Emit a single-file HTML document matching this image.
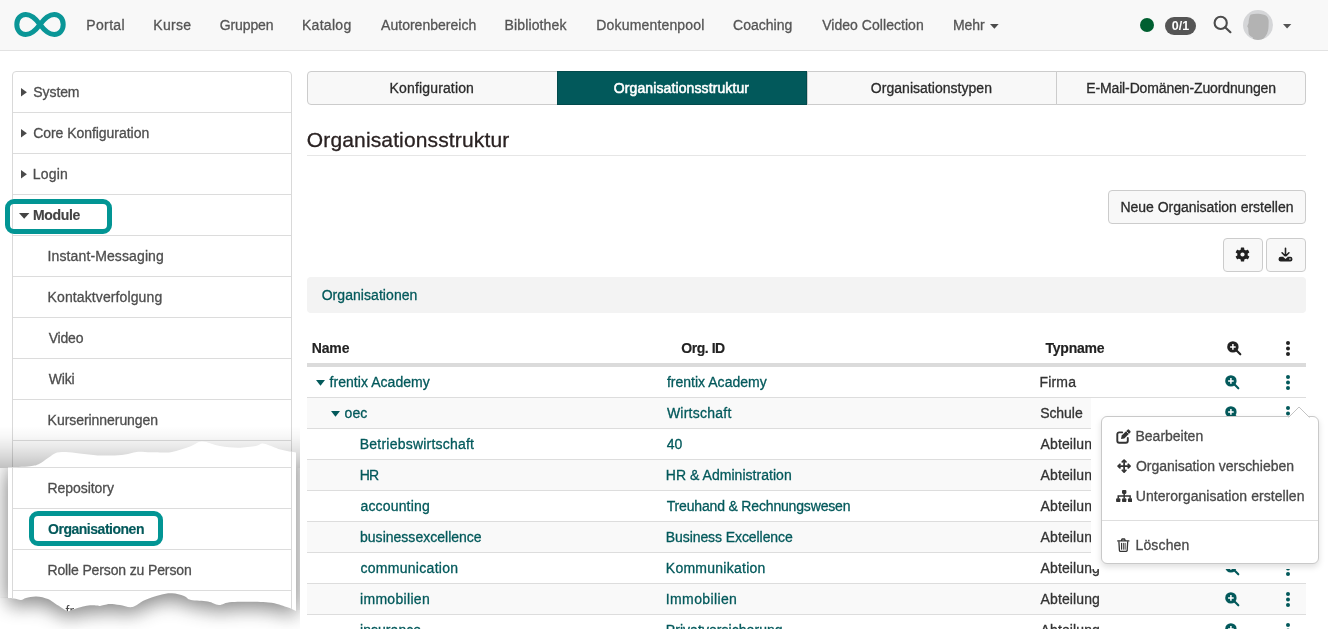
<!DOCTYPE html>
<html lang="de">
<head>
<meta charset="utf-8">
<title>Organisationsstruktur</title>
<style>
*{box-sizing:border-box;margin:0;padding:0}
html,body{width:1328px;height:629px;overflow:hidden;background:#fff}
body{font-family:"Liberation Sans",sans-serif;font-size:14px;color:#333;position:relative}
.a{position:absolute;white-space:nowrap}
span.a{-webkit-text-stroke:0.3px currentColor}
#nav{left:0;top:0;width:1328px;height:51px;background:#f8f8f8;border-bottom:1px solid #e2e2e2}
#side{left:12px;top:71px;width:280px;height:600px;border:1px solid #d9d9d9;border-radius:4px 4px 0 0;background:#fff}
.sl{left:13px;width:278px;height:1px;background:#dcdcdc}
.car{width:0;height:0;border-style:solid}
.tab{top:71px;height:34px;background:#f8f8f8;border:1px solid #ccc}
.tab.on{background:#02595b;border-color:#024a4c}
.rb{left:307px;width:999px;height:30px;background:#f9f9f9}
.rl{left:307px;width:999px;height:1px;background:#ddd}
.btn{border:1px solid #ccc;border-radius:4px;background:#f8f8f8}
</style>
</head>
<body>
<div id="root" style="position:absolute;left:0;top:0;width:1328px;height:629px;will-change:transform">
<!-- NAVBAR -->
<div id="nav" class="a"></div>
<svg class="a" style="left:13px;top:11px" width="54" height="27" viewBox="0 0 54 27"><path d="M27 13.5 C21.5 6 17 3.500 12.800 3.500 C7.300 3.500 3.800 8 3.800 13.500 C3.800 19 7.300 23.500 12.800 23.500 C17 23.500 21.500 21 27 13.500 C32.500 6 37 3.500 41.200 3.500 C46.700 3.500 50.200 8 50.200 13.500 C50.200 19 46.700 23.500 41.200 23.500 C37 23.500 32.500 21 27 13.500 Z" fill="none" stroke="#0a9697" stroke-width="5" stroke-linejoin="round"/></svg>
<div class="a" style="left:1140px;top:18px;width:14px;height:14px;border-radius:50%;background:#005f30"></div>
<div class="a" style="left:1165px;top:17px;width:31px;height:18px;border-radius:9px;background:#555;color:#fff;font-weight:bold;font-size:12.500px;line-height:18px;text-align:center">0/1</div>
<svg class="a" style="left:1212px;top:14px" width="22" height="22" viewBox="0 0 22 22"><circle cx="8.700" cy="8.900" r="6.100" fill="none" stroke="#4c4c4c" stroke-width="2.100"/><path d="M13.100 13.300 L18.400 18.200" stroke="#4c4c4c" stroke-width="2.200" stroke-linecap="round"/></svg>
<svg class="a" style="left:1243px;top:9.800px" width="30" height="30" viewBox="0 0 30 30"><defs><clipPath id="av"><circle cx="15" cy="15" r="15"/></clipPath></defs><circle cx="15" cy="15" r="15" fill="#d5d6d8"/><path clip-path="url(#av)" d="M7.900 4.600 C11 3.600 15 3.800 17.500 4 C21 4.300 23.500 5.500 24.600 7.200 C25.800 9.500 25.800 11.500 25.600 13.900 C25.600 17 25.400 19.500 24.600 21.900 C23.800 24.200 22.800 26 21.500 27.400 L19 30 L9.900 30 L9.900 27.400 C8 26.600 6.200 25.500 5.700 23.800 C5.300 22 5.400 20 5.200 17.900 L4.200 16.300 L5.600 13.100 C5.600 11 5.900 9 6.400 7.600 C6.700 6.300 7.100 5.200 7.900 4.600 Z" fill="#b3b3b3"/></svg>

<!-- SIDEBAR -->
<div id="side" class="a"></div>
<div class="a sl" style="top:112px"></div>
<div class="a sl" style="top:153px"></div>
<div class="a sl" style="top:194px"></div>
<div class="a sl" style="top:235px"></div>
<div class="a sl" style="top:276px"></div>
<div class="a sl" style="top:317px"></div>
<div class="a sl" style="top:358px"></div>
<div class="a sl" style="top:399px"></div>
<div class="a sl" style="top:440px"></div>
<div class="a" style="left:5px;top:199px;width:106.600px;height:34.600px;border:5px solid #029594;border-radius:9px"></div>

<svg class="a" style="left:20.4px;top:86.8px" width="7.9" height="10.4" viewBox="0 0 7.9 10.4"><path d="M1 1 L6.9 5.2 L1 9.4 Z" fill="#4a4a4a"/></svg>
<svg class="a" style="left:20.4px;top:127.8px" width="7.9" height="10.4" viewBox="0 0 7.9 10.4"><path d="M1 1 L6.9 5.2 L1 9.4 Z" fill="#4a4a4a"/></svg>
<svg class="a" style="left:20.4px;top:168.8px" width="7.9" height="10.4" viewBox="0 0 7.9 10.4"><path d="M1 1 L6.9 5.2 L1 9.4 Z" fill="#4a4a4a"/></svg>
<svg class="a" style="left:17.7px;top:211.7px" width="12.4" height="7.8" viewBox="0 0 12.4 7.8"><path d="M1 1 L11.4 1 L6.2 6.8 Z" fill="#444"/></svg>
<svg class="a" style="left:989.4px;top:22.8px" width="10.7" height="6.7" viewBox="0 0 10.7 6.7"><path d="M1 1 L9.7 1 L5.4 5.7 Z" fill="#4c4c4c"/></svg>
<svg class="a" style="left:1281.9px;top:22.7px" width="10.3" height="6.4" viewBox="0 0 10.3 6.4"><path d="M1 1 L9.3 1 L5.1 5.4 Z" fill="#555"/></svg>
<!-- TABS -->
<div class="a tab" style="left:307px;width:251px;border-radius:4px 0 0 4px"></div>
<div class="a tab" style="left:807px;width:250px"></div>
<div class="a tab" style="left:1056px;width:250px;border-radius:0 4px 4px 0"></div>
<div class="a tab on" style="left:557px;width:250px"></div>

<div class="a" style="left:307px;top:155px;width:999px;height:1px;background:#e6e6e6"></div>

<!-- BUTTONS -->
<div class="a btn" style="left:1108px;top:190px;width:198px;height:34px"></div>
<div class="a btn" style="left:1223px;top:238px;width:40px;height:34px"></div>
<div class="a btn" style="left:1266px;top:238px;width:40px;height:34px"></div>
<!-- gear -->
<svg class="a" style="left:1234.800px;top:247.300px" width="15" height="15" viewBox="-7.500 -7.500 15 15"><g fill="#222"><circle r="5.200"/><rect x="-1.700" y="-7.100" width="3.400" height="14.200" rx="0.600"/><rect x="-1.700" y="-7.100" width="3.400" height="14.200" rx="0.600" transform="rotate(60)"/><rect x="-1.700" y="-7.100" width="3.400" height="14.200" rx="0.600" transform="rotate(120)"/></g><circle r="2.100" fill="#f8f8f8"/></svg>
<!-- download -->
<svg class="a" style="left:1278.300px;top:247.300px" width="15" height="15" viewBox="0 0 15 15"><path d="M7.500 1.200 V9 M4.100 5.800 L7.500 9.200 L10.900 5.800" fill="none" stroke="#222" stroke-width="1.600" stroke-linecap="round" stroke-linejoin="round"/><rect x="0.600" y="9.800" width="13.800" height="4.600" rx="2" fill="#222"/><path d="M4.800 9.600 L7.500 12.100 L10.200 9.600 Z" fill="#f8f8f8"/><circle cx="12" cy="12.100" r="0.750" fill="#f8f8f8"/></svg>

<!-- ORG BAR -->
<div class="a" style="left:307px;top:277px;width:999px;height:36px;border-radius:4px;background:#f3f3f3"></div>

<!-- TABLE -->
<div class="a" style="left:307px;top:363.100px;width:999px;height:3.800px;background:#dbdbdb"></div>
<div class="a rl" style="top:397px"></div>
<div class="a rb" style="top:398px"></div>
<div class="a rl" style="top:428px"></div>
<div class="a rl" style="top:459px"></div>
<div class="a rb" style="top:460px"></div>
<div class="a rl" style="top:490px"></div>
<div class="a rl" style="top:521px"></div>
<div class="a rb" style="top:522px"></div>
<div class="a rl" style="top:552px"></div>
<div class="a rl" style="top:583px"></div>
<div class="a rb" style="top:584px"></div>
<div class="a rl" style="top:614px"></div>
<div class="a rl" style="top:645px"></div>
<svg class="a" style="left:1226.5px;top:340.8px" width="15" height="15" viewBox="0 0 15 15"><circle cx="5.900" cy="5.900" r="5.700" fill="#222"/><path d="M9.800 9.800 L13.300 13.300" stroke="#222" stroke-width="2.100" stroke-linecap="round"/><path d="M5.900 3.100 V8.700 M3.100 5.900 H8.700" stroke="#fff" stroke-width="1.500"/></svg>
<svg class="a" style="left:1285.2px;top:339.7px" width="6" height="18" viewBox="0 0 6 18"><circle cx="3" cy="3" r="2" fill="#222"/><circle cx="3" cy="8.500" r="2" fill="#222"/><circle cx="3" cy="14" r="2" fill="#222"/></svg>
<svg class="a" style="left:1225.1px;top:374.8px" width="15" height="15" viewBox="0 0 15 15"><circle cx="5.900" cy="5.900" r="5.700" fill="#03595b"/><path d="M9.800 9.800 L13.300 13.300" stroke="#03595b" stroke-width="2.100" stroke-linecap="round"/><path d="M5.900 3.100 V8.700 M3.100 5.900 H8.700" stroke="#fff" stroke-width="1.500"/></svg>
<svg class="a" style="left:1285.2px;top:374.2px" width="6" height="18" viewBox="0 0 6 18"><circle cx="3" cy="3" r="2" fill="#03595b"/><circle cx="3" cy="8.500" r="2" fill="#03595b"/><circle cx="3" cy="14" r="2" fill="#03595b"/></svg>
<svg class="a" style="left:1225.1px;top:405.8px" width="15" height="15" viewBox="0 0 15 15"><circle cx="5.900" cy="5.900" r="5.700" fill="#03595b"/><path d="M9.800 9.800 L13.300 13.300" stroke="#03595b" stroke-width="2.100" stroke-linecap="round"/><path d="M5.900 3.100 V8.700 M3.100 5.900 H8.700" stroke="#fff" stroke-width="1.500"/></svg>
<svg class="a" style="left:1285.2px;top:405.2px" width="6" height="18" viewBox="0 0 6 18"><circle cx="3" cy="3" r="2" fill="#03595b"/><circle cx="3" cy="8.500" r="2" fill="#03595b"/><circle cx="3" cy="14" r="2" fill="#03595b"/></svg>
<svg class="a" style="left:1225.1px;top:436.8px" width="15" height="15" viewBox="0 0 15 15"><circle cx="5.900" cy="5.900" r="5.700" fill="#03595b"/><path d="M9.800 9.800 L13.300 13.300" stroke="#03595b" stroke-width="2.100" stroke-linecap="round"/><path d="M5.900 3.100 V8.700 M3.100 5.900 H8.700" stroke="#fff" stroke-width="1.500"/></svg>
<svg class="a" style="left:1285.2px;top:436.2px" width="6" height="18" viewBox="0 0 6 18"><circle cx="3" cy="3" r="2" fill="#03595b"/><circle cx="3" cy="8.500" r="2" fill="#03595b"/><circle cx="3" cy="14" r="2" fill="#03595b"/></svg>
<svg class="a" style="left:1225.1px;top:467.8px" width="15" height="15" viewBox="0 0 15 15"><circle cx="5.900" cy="5.900" r="5.700" fill="#03595b"/><path d="M9.800 9.800 L13.300 13.300" stroke="#03595b" stroke-width="2.100" stroke-linecap="round"/><path d="M5.900 3.100 V8.700 M3.100 5.900 H8.700" stroke="#fff" stroke-width="1.500"/></svg>
<svg class="a" style="left:1285.2px;top:467.2px" width="6" height="18" viewBox="0 0 6 18"><circle cx="3" cy="3" r="2" fill="#03595b"/><circle cx="3" cy="8.500" r="2" fill="#03595b"/><circle cx="3" cy="14" r="2" fill="#03595b"/></svg>
<svg class="a" style="left:1225.1px;top:498.8px" width="15" height="15" viewBox="0 0 15 15"><circle cx="5.900" cy="5.900" r="5.700" fill="#03595b"/><path d="M9.800 9.800 L13.300 13.300" stroke="#03595b" stroke-width="2.100" stroke-linecap="round"/><path d="M5.900 3.100 V8.700 M3.100 5.900 H8.700" stroke="#fff" stroke-width="1.500"/></svg>
<svg class="a" style="left:1285.2px;top:498.2px" width="6" height="18" viewBox="0 0 6 18"><circle cx="3" cy="3" r="2" fill="#03595b"/><circle cx="3" cy="8.500" r="2" fill="#03595b"/><circle cx="3" cy="14" r="2" fill="#03595b"/></svg>
<svg class="a" style="left:1225.1px;top:529.8px" width="15" height="15" viewBox="0 0 15 15"><circle cx="5.900" cy="5.900" r="5.700" fill="#03595b"/><path d="M9.800 9.800 L13.300 13.300" stroke="#03595b" stroke-width="2.100" stroke-linecap="round"/><path d="M5.900 3.100 V8.700 M3.100 5.900 H8.700" stroke="#fff" stroke-width="1.500"/></svg>
<svg class="a" style="left:1285.2px;top:529.2px" width="6" height="18" viewBox="0 0 6 18"><circle cx="3" cy="3" r="2" fill="#03595b"/><circle cx="3" cy="8.500" r="2" fill="#03595b"/><circle cx="3" cy="14" r="2" fill="#03595b"/></svg>
<svg class="a" style="left:1225.1px;top:560.8px" width="15" height="15" viewBox="0 0 15 15"><circle cx="5.900" cy="5.900" r="5.700" fill="#03595b"/><path d="M9.800 9.800 L13.300 13.300" stroke="#03595b" stroke-width="2.100" stroke-linecap="round"/><path d="M5.900 3.100 V8.700 M3.100 5.900 H8.700" stroke="#fff" stroke-width="1.500"/></svg>
<svg class="a" style="left:1285.2px;top:560.2px" width="6" height="18" viewBox="0 0 6 18"><circle cx="3" cy="3" r="2" fill="#03595b"/><circle cx="3" cy="8.500" r="2" fill="#03595b"/><circle cx="3" cy="14" r="2" fill="#03595b"/></svg>
<svg class="a" style="left:1225.1px;top:591.8px" width="15" height="15" viewBox="0 0 15 15"><circle cx="5.900" cy="5.900" r="5.700" fill="#03595b"/><path d="M9.800 9.800 L13.300 13.300" stroke="#03595b" stroke-width="2.100" stroke-linecap="round"/><path d="M5.900 3.100 V8.700 M3.100 5.900 H8.700" stroke="#fff" stroke-width="1.500"/></svg>
<svg class="a" style="left:1285.2px;top:591.2px" width="6" height="18" viewBox="0 0 6 18"><circle cx="3" cy="3" r="2" fill="#03595b"/><circle cx="3" cy="8.500" r="2" fill="#03595b"/><circle cx="3" cy="14" r="2" fill="#03595b"/></svg>
<svg class="a" style="left:1225.1px;top:622.8px" width="15" height="15" viewBox="0 0 15 15"><circle cx="5.900" cy="5.900" r="5.700" fill="#03595b"/><path d="M9.800 9.800 L13.300 13.300" stroke="#03595b" stroke-width="2.100" stroke-linecap="round"/><path d="M5.900 3.100 V8.700 M3.100 5.900 H8.700" stroke="#fff" stroke-width="1.500"/></svg>
<svg class="a" style="left:1285.2px;top:622.2px" width="6" height="18" viewBox="0 0 6 18"><circle cx="3" cy="3" r="2" fill="#03595b"/><circle cx="3" cy="8.500" r="2" fill="#03595b"/><circle cx="3" cy="14" r="2" fill="#03595b"/></svg>
<svg class="a" style="left:315.0px;top:378.8px" width="11.0" height="7.7" viewBox="0 0 11.0 7.7"><path d="M1 1 L10.0 1 L5.5 6.7 Z" fill="#03595b"/></svg>
<svg class="a" style="left:330.3px;top:409.8px" width="11.0" height="7.7" viewBox="0 0 11.0 7.7"><path d="M1 1 L10.0 1 L5.5 6.7 Z" fill="#03595b"/></svg>
<span class="a" style="left:86.31px;top:15.0px;height:20px;line-height:20px;font-size:14px;color:#555;letter-spacing:0.349px">Portal</span>
<span class="a" style="left:153.31px;top:15.0px;height:20px;line-height:20px;font-size:14px;color:#555;letter-spacing:0.272px">Kurse</span>
<span class="a" style="left:219.64px;top:15.0px;height:20px;line-height:20px;font-size:14px;color:#555;letter-spacing:-0.090px">Gruppen</span>
<span class="a" style="left:302.01px;top:15.0px;height:20px;line-height:20px;font-size:14px;color:#555;letter-spacing:0.283px">Katalog</span>
<span class="a" style="left:381.10px;top:15.0px;height:20px;line-height:20px;font-size:14px;color:#555;letter-spacing:0.010px">Autorenbereich</span>
<span class="a" style="left:504.51px;top:15.0px;height:20px;line-height:20px;font-size:14px;color:#555;letter-spacing:0.141px">Bibliothek</span>
<span class="a" style="left:596.31px;top:15.0px;height:20px;line-height:20px;font-size:14px;color:#555;letter-spacing:0.167px">Dokumentenpool</span>
<span class="a" style="left:733.04px;top:15.0px;height:20px;line-height:20px;font-size:14px;color:#555;letter-spacing:0.013px">Coaching</span>
<span class="a" style="left:822.20px;top:15.0px;height:20px;line-height:20px;font-size:14px;color:#555;letter-spacing:0.038px">Video Collection</span>
<span class="a" style="left:952.91px;top:15.0px;height:20px;line-height:20px;font-size:14px;color:#555;letter-spacing:-0.011px">Mehr</span>
<span class="a" style="left:33.36px;top:82.0px;height:20px;line-height:20px;font-size:14px;color:#4e4e4e;letter-spacing:-0.103px">System</span>
<span class="a" style="left:33.14px;top:123.0px;height:20px;line-height:20px;font-size:14px;color:#4e4e4e;letter-spacing:-0.041px">Core Konfiguration</span>
<span class="a" style="left:32.71px;top:164.0px;height:20px;line-height:20px;font-size:14px;color:#4e4e4e;letter-spacing:0.231px">Login</span>
<span class="a" style="left:32.92px;top:205.0px;height:20px;line-height:20px;font-size:14px;color:#444;letter-spacing:-0.314px;font-weight:bold;-webkit-text-stroke:0.15px currentColor">Module</span>
<span class="a" style="left:47.61px;top:246.0px;height:20px;line-height:20px;font-size:14px;color:#4e4e4e;letter-spacing:0.112px">Instant-Messaging</span>
<span class="a" style="left:47.61px;top:287.0px;height:20px;line-height:20px;font-size:14px;color:#4e4e4e;letter-spacing:0.108px">Kontaktverfolgung</span>
<span class="a" style="left:48.70px;top:328.0px;height:20px;line-height:20px;font-size:14px;color:#4e4e4e;letter-spacing:-0.197px">Video</span>
<span class="a" style="left:48.70px;top:369.0px;height:20px;line-height:20px;font-size:14px;color:#4e4e4e;letter-spacing:-0.171px">Wiki</span>
<span class="a" style="left:47.61px;top:410.0px;height:20px;line-height:20px;font-size:14px;color:#4e4e4e;letter-spacing:-0.054px">Kurserinnerungen</span>
<span class="a" style="left:389.61px;top:78.0px;height:20px;line-height:20px;font-size:14px;color:#2b2b2b;letter-spacing:0.148px">Konfiguration</span>
<span class="a" style="left:613.84px;top:78.0px;height:20px;line-height:20px;font-size:14px;color:#fff;letter-spacing:0.103px;-webkit-text-stroke:0.55px currentColor">Organisationsstruktur</span>
<span class="a" style="left:870.84px;top:78.0px;height:20px;line-height:20px;font-size:14px;color:#2b2b2b;letter-spacing:0.030px">Organisationstypen</span>
<span class="a" style="left:1086.21px;top:78.0px;height:20px;line-height:20px;font-size:14px;color:#2b2b2b;letter-spacing:-0.128px">E-Mail-Domänen-Zuordnungen</span>
<span class="a" style="left:306.82px;top:125.0px;height:30px;line-height:30px;font-size:21px;color:#2a2222;letter-spacing:0.140px">Organisationsstruktur</span>
<span class="a" style="left:1120.41px;top:197.0px;height:20px;line-height:20px;font-size:14px;color:#2b2b2b;letter-spacing:-0.018px">Neue Organisation erstellen</span>
<span class="a" style="left:321.64px;top:285.0px;height:20px;line-height:20px;font-size:14px;color:#03595b;letter-spacing:0.061px">Organisationen</span>
<span class="a" style="left:311.73px;top:338.0px;height:20px;line-height:20px;font-size:14px;color:#222;letter-spacing:-0.136px;font-weight:bold;-webkit-text-stroke:0.15px currentColor">Name</span>
<span class="a" style="left:681.26px;top:338.0px;height:20px;line-height:20px;font-size:14px;color:#222;letter-spacing:-0.458px;font-weight:bold;-webkit-text-stroke:0.15px currentColor">Org. ID</span>
<span class="a" style="left:1045.60px;top:338.0px;height:20px;line-height:20px;font-size:14px;color:#222;letter-spacing:-0.262px;font-weight:bold;-webkit-text-stroke:0.15px currentColor">Typname</span>
<span class="a" style="left:329.60px;top:372.0px;height:20px;line-height:20px;font-size:14px;color:#03595b;letter-spacing:0.038px">frentix Academy</span>
<span class="a" style="left:666.90px;top:372.0px;height:20px;line-height:20px;font-size:14px;color:#03595b;letter-spacing:0.016px">frentix Academy</span>
<span class="a" style="left:1039.51px;top:372.0px;height:20px;line-height:20px;font-size:14px;color:#333;letter-spacing:0.183px">Firma</span>
<span class="a" style="left:344.56px;top:403.0px;height:20px;line-height:20px;font-size:14px;color:#03595b;letter-spacing:0.042px">oec</span>
<span class="a" style="left:666.90px;top:403.0px;height:20px;line-height:20px;font-size:14px;color:#03595b;letter-spacing:0.247px">Wirtschaft</span>
<span class="a" style="left:1040.16px;top:403.0px;height:20px;line-height:20px;font-size:14px;color:#333;letter-spacing:-0.060px">Schule</span>
<span class="a" style="left:359.81px;top:434.0px;height:20px;line-height:20px;font-size:14px;color:#03595b;letter-spacing:0.215px">Betriebswirtschaft</span>
<span class="a" style="left:666.68px;top:434.0px;height:20px;line-height:20px;font-size:14px;color:#03595b;letter-spacing:-0.005px">40</span>
<span class="a" style="left:1040.60px;top:434.0px;height:20px;line-height:20px;font-size:14px;color:#333;letter-spacing:0.113px">Abteilung</span>
<span class="a" style="left:359.81px;top:465.0px;height:20px;line-height:20px;font-size:14px;color:#03595b;letter-spacing:-0.842px">HR</span>
<span class="a" style="left:665.81px;top:465.0px;height:20px;line-height:20px;font-size:14px;color:#03595b;letter-spacing:0.035px">HR &amp; Administration</span>
<span class="a" style="left:1040.60px;top:465.0px;height:20px;line-height:20px;font-size:14px;color:#333;letter-spacing:0.113px">Abteilung</span>
<span class="a" style="left:360.46px;top:496.0px;height:20px;line-height:20px;font-size:14px;color:#03595b;letter-spacing:0.167px">accounting</span>
<span class="a" style="left:666.68px;top:496.0px;height:20px;line-height:20px;font-size:14px;color:#03595b;letter-spacing:-0.167px">Treuhand &amp; Rechnungswesen</span>
<span class="a" style="left:1040.60px;top:496.0px;height:20px;line-height:20px;font-size:14px;color:#333;letter-spacing:0.113px">Abteilung</span>
<span class="a" style="left:360.03px;top:527.0px;height:20px;line-height:20px;font-size:14px;color:#03595b;letter-spacing:0.014px">businessexcellence</span>
<span class="a" style="left:665.81px;top:527.0px;height:20px;line-height:20px;font-size:14px;color:#03595b;letter-spacing:-0.080px">Business Excellence</span>
<span class="a" style="left:1040.60px;top:527.0px;height:20px;line-height:20px;font-size:14px;color:#333;letter-spacing:0.113px">Abteilung</span>
<span class="a" style="left:360.46px;top:558.0px;height:20px;line-height:20px;font-size:14px;color:#03595b;letter-spacing:0.289px">communication</span>
<span class="a" style="left:665.81px;top:558.0px;height:20px;line-height:20px;font-size:14px;color:#03595b;letter-spacing:0.258px">Kommunikation</span>
<span class="a" style="left:1040.60px;top:558.0px;height:20px;line-height:20px;font-size:14px;color:#333;letter-spacing:0.113px">Abteilung</span>
<span class="a" style="left:360.03px;top:589.0px;height:20px;line-height:20px;font-size:14px;color:#03595b;letter-spacing:0.306px">immobilien</span>
<span class="a" style="left:665.81px;top:589.0px;height:20px;line-height:20px;font-size:14px;color:#03595b;letter-spacing:0.377px">Immobilien</span>
<span class="a" style="left:1040.60px;top:589.0px;height:20px;line-height:20px;font-size:14px;color:#333;letter-spacing:0.113px">Abteilung</span>
<span class="a" style="left:360.03px;top:620.0px;height:20px;line-height:20px;font-size:14px;color:#03595b;letter-spacing:0.042px">insurance</span>
<span class="a" style="left:665.81px;top:620.0px;height:20px;line-height:20px;font-size:14px;color:#03595b;letter-spacing:0.050px">Privatversicherung</span>
<span class="a" style="left:1040.60px;top:620.0px;height:20px;line-height:20px;font-size:14px;color:#333;letter-spacing:0.113px">Abteilung</span>

<!-- popup white rect -->
<div class="a" style="left:1091px;top:398px;width:237px;height:171px;background:#fff"></div>
<svg class="a" style="left:1225.1px;top:405.8px" width="15" height="15" viewBox="0 0 15 15"><circle cx="5.900" cy="5.900" r="5.700" fill="#03595b"/><path d="M9.800 9.800 L13.300 13.300" stroke="#03595b" stroke-width="2.100" stroke-linecap="round"/><path d="M5.900 3.100 V8.700 M3.100 5.900 H8.700" stroke="#fff" stroke-width="1.500"/></svg><svg class="a" style="left:1285.2px;top:405.2px" width="6" height="18" viewBox="0 0 6 18"><circle cx="3" cy="3" r="2" fill="#03595b"/><circle cx="3" cy="8.500" r="2" fill="#03595b"/><circle cx="3" cy="14" r="2" fill="#03595b"/></svg>
<!-- popup -->
<div class="a" style="left:1101px;top:416px;width:217.500px;height:148px;background:#fff;border:1px solid #c9c9c9;border-radius:6px;box-shadow:0 3px 6px rgba(0,0,0,0.13)"></div>
<svg class="a" style="left:1286px;top:404px" width="26" height="14" viewBox="0 0 26 14"><path d="M2.500 13.500 L13 3 L23.500 13.500" fill="#fff" stroke="#c4c4c4" stroke-width="1"/><rect x="3" y="13" width="20" height="1" fill="#fff"/></svg>
<div class="a" style="left:1102px;top:520px;width:215.500px;height:1px;background:#dedede"></div>
<svg class="a" style="left:1116px;top:428.500px" width="15" height="15" viewBox="0 0 15 15"><path d="M6.200 3.400 H3.200 A1.900 1.900 0 0 0 1.300 5.300 V11.800 A1.900 1.900 0 0 0 3.200 13.700 H9.900 A1.900 1.900 0 0 0 11.800 11.800 V8.900" fill="none" stroke="#333" stroke-width="1.900" stroke-linecap="round"/><path d="M11.600 0.700 A1 1 0 0 1 13 0.700 L14.300 2 A1 1 0 0 1 14.300 3.400 L8.300 9.400 L5 10.100 L5.700 6.600 Z" fill="#333"/><path d="M10.400 2.400 L12.600 4.600" stroke="#fff" stroke-width="0.800"/></svg>
<svg class="a" style="left:1116.500px;top:459px" width="14.200" height="14.200" viewBox="0 0 14 14"><path d="M7 1.500 V12.500 M1.500 7 H12.500" stroke="#333" stroke-width="1.700"/><path d="M5.200 2.900 L7 1.100 L8.800 2.900 M5.200 11.100 L7 12.900 L8.800 11.100 M2.900 5.200 L1.100 7 L2.900 8.800 M11.100 5.200 L12.900 7 L11.100 8.800" fill="none" stroke="#333" stroke-width="1.700" stroke-linecap="round" stroke-linejoin="round"/></svg>
<svg class="a" style="left:1115.500px;top:489.500px" width="16.400" height="12.300" viewBox="0 0 16.400 12.300"><rect x="6" y="0" width="4.400" height="3.900" rx="1.100" fill="#333"/><rect x="0.100" y="8.200" width="4.300" height="4" rx="1.100" fill="#333"/><rect x="6.050" y="8.200" width="4.300" height="4" rx="1.100" fill="#333"/><rect x="12" y="8.200" width="4.300" height="4" rx="1.100" fill="#333"/><path d="M8.200 3.500 V8.500 M2.250 8.500 V6 H14.150 V8.500" fill="none" stroke="#333" stroke-width="1.500"/></svg>
<svg class="a" style="left:1117px;top:537.800px" width="12.600" height="14.200" viewBox="0 0 12.600 14.200"><path d="M0.700 2.900 H11.900 M4.300 2.700 L5 1 H7.600 L8.300 2.700" fill="none" stroke="#333" stroke-width="1.300" stroke-linecap="round" stroke-linejoin="round"/><path d="M1.900 3.200 L2.400 12.200 A1.200 1.200 0 0 0 3.600 13.400 H9 A1.200 1.200 0 0 0 10.200 12.200 L10.700 3.200" fill="none" stroke="#333" stroke-width="1.300"/><path d="M4.500 5.300 V11.300 M6.300 5.300 V11.300 M8.100 5.300 V11.300" stroke="#333" stroke-width="1" stroke-linecap="round"/></svg>

<!-- TORN PAPER -->
<svg class="a" style="left:0;top:415px" width="301" height="214" viewBox="0 415 301 214">
<defs>
<filter id="sh" x="-20%" y="-30%" width="140%" height="160%"><feGaussianBlur stdDeviation="11"/></filter>
<linearGradient id="lg" x1="0" y1="0" x2="0" y2="1"><stop offset="0" stop-color="#000" stop-opacity="0"/><stop offset="0.250" stop-color="#000" stop-opacity="0.030"/><stop offset="0.500" stop-color="#000" stop-opacity="0.088"/><stop offset="0.750" stop-color="#000" stop-opacity="0.160"/><stop offset="1" stop-color="#000" stop-opacity="0.245"/></linearGradient>
<linearGradient id="lgl" x1="0" y1="0" x2="1" y2="0"><stop offset="0" stop-color="#000" stop-opacity="0.025"/><stop offset="1" stop-color="#000" stop-opacity="0.06"/></linearGradient>
<filter id="sh2" x="-20%" y="-30%" width="140%" height="160%"><feGaussianBlur stdDeviation="8"/></filter>
<clipPath id="bc"><path d="M0 597 H8 V575 H296 V610 H300 V640 H0 Z"/></clipPath>
<clipPath id="mc"><rect x="0" y="468" width="300" height="170"/></clipPath>
<clipPath id="tc"><rect x="0" y="415" width="300" height="214"/></clipPath>
</defs>
<g clip-path="url(#tc)">
<rect x="0" y="592" width="300" height="40" fill="#fff"/>
<rect x="0" y="426" width="300" height="42" fill="url(#lg)"/>
<rect x="0" y="468" width="8" height="130" fill="url(#lgl)"/><rect x="296" y="468" width="4" height="142" fill="#000" opacity="0.055"/>
<g clip-path="url(#mc)"><path id="pp" filter="url(#sh)" opacity="0.46" transform="translate(0,4)" d="M8 467.5 C11.7 467.3 24.8 466.8 30.0 466.2 C35.2 465.6 36.0 465.4 39.0 464.0 C42.0 462.6 45.0 459.9 48.0 458.0 C51.0 456.1 54.0 453.6 57.0 452.6 C60.0 451.6 62.2 451.9 66.0 452.0 C69.8 452.1 74.4 452.9 79.7 453.5 C85.0 454.1 92.5 455.1 97.7 455.4 C102.9 455.7 106.5 455.6 111.0 455.5 C115.5 455.4 120.7 455.1 125.0 454.5 C129.3 453.9 132.4 452.3 136.6 451.9 C140.8 451.5 146.1 452.2 150.0 452.3 C153.9 452.4 156.3 452.4 160.0 452.4 C163.7 452.3 167.0 453.0 172.0 452.0 C177.0 451.0 185.0 448.3 190.0 446.5 C195.0 444.7 197.0 441.5 202.0 441.4 C207.0 441.3 214.0 444.9 220.0 446.0 C226.0 447.1 232.0 447.7 238.0 447.7 C244.0 447.7 251.7 446.7 256.0 446.0 C260.3 445.3 259.9 443.1 264.0 443.7 C268.1 444.3 275.2 448.0 280.5 449.5 C285.8 451.0 293.4 452.0 296.0 452.5 L296 611 C294.4 610.3 291.1 608.4 286.5 607.0 C281.9 605.6 277.6 603.3 268.5 602.5 C259.4 601.7 240.2 601.6 232.0 602.0 C223.8 602.4 223.0 605.1 219.0 605.0 C215.0 604.9 212.7 602.3 208.0 601.5 C203.3 600.7 195.0 600.9 191.0 600.0 C187.0 599.1 187.2 597.1 184.0 596.0 C180.8 594.9 176.0 593.5 172.0 593.3 C168.0 593.1 164.6 593.8 160.0 595.0 C155.4 596.2 149.1 598.3 144.5 600.3 C139.9 602.3 136.6 606.2 132.5 607.0 C128.4 607.8 123.8 605.5 120.0 605.0 C116.2 604.5 112.7 604.0 110.0 604.0 C107.3 604.0 105.7 604.7 104.0 605.0 C102.3 605.3 101.2 605.9 100.0 606.0 C98.8 606.1 98.7 605.6 97.0 605.5 C95.3 605.4 92.3 605.1 90.0 605.3 C87.7 605.5 85.3 606.0 83.0 606.5 C80.7 607.0 77.8 607.9 76.0 608.5 C74.2 609.1 73.2 609.5 72.0 610.0 C70.8 610.5 69.5 611.2 68.5 611.3 C67.5 611.4 67.1 611.0 66.0 610.5 C64.9 610.0 63.8 609.2 62.0 608.0 C60.2 606.8 57.3 605.0 55.0 603.5 C52.7 602.0 51.1 600.2 48.0 599.0 C44.9 597.8 40.1 596.7 36.4 596.5 C32.7 596.3 28.6 597.4 26.0 598.0 C23.4 598.6 23.0 599.9 21.0 600.0 C19.0 600.1 16.2 598.8 14.0 598.5 C11.8 598.2 9.0 598.1 8.0 598.0 Z" fill="#000"/></g>
<g clip-path="url(#bc)"><path filter="url(#sh2)" opacity="0.09" transform="translate(0,10)" d="M8 467.5 C11.7 467.3 24.8 466.8 30.0 466.2 C35.2 465.6 36.0 465.4 39.0 464.0 C42.0 462.6 45.0 459.9 48.0 458.0 C51.0 456.1 54.0 453.6 57.0 452.6 C60.0 451.6 62.2 451.9 66.0 452.0 C69.8 452.1 74.4 452.9 79.7 453.5 C85.0 454.1 92.5 455.1 97.7 455.4 C102.9 455.7 106.5 455.6 111.0 455.5 C115.5 455.4 120.7 455.1 125.0 454.5 C129.3 453.9 132.4 452.3 136.6 451.9 C140.8 451.5 146.1 452.2 150.0 452.3 C153.9 452.4 156.3 452.4 160.0 452.4 C163.7 452.3 167.0 453.0 172.0 452.0 C177.0 451.0 185.0 448.3 190.0 446.5 C195.0 444.7 197.0 441.5 202.0 441.4 C207.0 441.3 214.0 444.9 220.0 446.0 C226.0 447.1 232.0 447.7 238.0 447.7 C244.0 447.7 251.7 446.7 256.0 446.0 C260.3 445.3 259.9 443.1 264.0 443.7 C268.1 444.3 275.2 448.0 280.5 449.5 C285.8 451.0 293.4 452.0 296.0 452.5 L296 611 C294.4 610.3 291.1 608.4 286.5 607.0 C281.9 605.6 277.6 603.3 268.5 602.5 C259.4 601.7 240.2 601.6 232.0 602.0 C223.8 602.4 223.0 605.1 219.0 605.0 C215.0 604.9 212.7 602.3 208.0 601.5 C203.3 600.7 195.0 600.9 191.0 600.0 C187.0 599.1 187.2 597.1 184.0 596.0 C180.8 594.9 176.0 593.5 172.0 593.3 C168.0 593.1 164.6 593.8 160.0 595.0 C155.4 596.2 149.1 598.3 144.5 600.3 C139.9 602.3 136.6 606.2 132.5 607.0 C128.4 607.8 123.8 605.5 120.0 605.0 C116.2 604.5 112.7 604.0 110.0 604.0 C107.3 604.0 105.7 604.7 104.0 605.0 C102.3 605.3 101.2 605.9 100.0 606.0 C98.8 606.1 98.7 605.6 97.0 605.5 C95.3 605.4 92.3 605.1 90.0 605.3 C87.7 605.5 85.3 606.0 83.0 606.5 C80.7 607.0 77.8 607.9 76.0 608.5 C74.2 609.1 73.2 609.5 72.0 610.0 C70.8 610.5 69.5 611.2 68.5 611.3 C67.5 611.4 67.1 611.0 66.0 610.5 C64.9 610.0 63.8 609.2 62.0 608.0 C60.2 606.8 57.3 605.0 55.0 603.5 C52.7 602.0 51.1 600.2 48.0 599.0 C44.9 597.8 40.1 596.7 36.4 596.5 C32.7 596.3 28.6 597.4 26.0 598.0 C23.4 598.6 23.0 599.9 21.0 600.0 C19.0 600.1 16.2 598.8 14.0 598.5 C11.8 598.2 9.0 598.1 8.0 598.0 Z" fill="#000"/></g>
<path d="M8 467.5 C11.7 467.3 24.8 466.8 30.0 466.2 C35.2 465.6 36.0 465.4 39.0 464.0 C42.0 462.6 45.0 459.9 48.0 458.0 C51.0 456.1 54.0 453.6 57.0 452.6 C60.0 451.6 62.2 451.9 66.0 452.0 C69.8 452.1 74.4 452.9 79.7 453.5 C85.0 454.1 92.5 455.1 97.7 455.4 C102.9 455.7 106.5 455.6 111.0 455.5 C115.5 455.4 120.7 455.1 125.0 454.5 C129.3 453.9 132.4 452.3 136.6 451.9 C140.8 451.5 146.1 452.2 150.0 452.3 C153.9 452.4 156.3 452.4 160.0 452.4 C163.7 452.3 167.0 453.0 172.0 452.0 C177.0 451.0 185.0 448.3 190.0 446.5 C195.0 444.7 197.0 441.5 202.0 441.4 C207.0 441.3 214.0 444.9 220.0 446.0 C226.0 447.1 232.0 447.7 238.0 447.7 C244.0 447.7 251.7 446.7 256.0 446.0 C260.3 445.3 259.9 443.1 264.0 443.7 C268.1 444.3 275.2 448.0 280.5 449.5 C285.8 451.0 293.4 452.0 296.0 452.5 L296 611 C294.4 610.3 291.1 608.4 286.5 607.0 C281.9 605.6 277.6 603.3 268.5 602.5 C259.4 601.7 240.2 601.6 232.0 602.0 C223.8 602.4 223.0 605.1 219.0 605.0 C215.0 604.9 212.7 602.3 208.0 601.5 C203.3 600.7 195.0 600.9 191.0 600.0 C187.0 599.1 187.2 597.1 184.0 596.0 C180.8 594.9 176.0 593.5 172.0 593.3 C168.0 593.1 164.6 593.8 160.0 595.0 C155.4 596.2 149.1 598.3 144.5 600.3 C139.9 602.3 136.6 606.2 132.5 607.0 C128.4 607.8 123.8 605.5 120.0 605.0 C116.2 604.5 112.7 604.0 110.0 604.0 C107.3 604.0 105.7 604.7 104.0 605.0 C102.3 605.3 101.2 605.9 100.0 606.0 C98.8 606.1 98.7 605.6 97.0 605.5 C95.3 605.4 92.3 605.1 90.0 605.3 C87.7 605.5 85.3 606.0 83.0 606.5 C80.7 607.0 77.8 607.9 76.0 608.5 C74.2 609.1 73.2 609.5 72.0 610.0 C70.8 610.5 69.5 611.2 68.5 611.3 C67.5 611.4 67.1 611.0 66.0 610.5 C64.9 610.0 63.8 609.2 62.0 608.0 C60.2 606.8 57.3 605.0 55.0 603.5 C52.7 602.0 51.1 600.2 48.0 599.0 C44.9 597.8 40.1 596.7 36.4 596.5 C32.7 596.3 28.6 597.4 26.0 598.0 C23.4 598.6 23.0 599.9 21.0 600.0 C19.0 600.1 16.2 598.8 14.0 598.5 C11.8 598.2 9.0 598.1 8.0 598.0 Z" fill="#fff"/>
</g>
<path d="M12.500 440 V612 M291.500 440 V612" stroke="#d9d9d9" stroke-width="1" fill="none" clip-path="url(#pc)"/>
<clipPath id="pc"><path d="M8 467.5 C11.7 467.3 24.8 466.8 30.0 466.2 C35.2 465.6 36.0 465.4 39.0 464.0 C42.0 462.6 45.0 459.9 48.0 458.0 C51.0 456.1 54.0 453.6 57.0 452.6 C60.0 451.6 62.2 451.9 66.0 452.0 C69.8 452.1 74.4 452.9 79.7 453.5 C85.0 454.1 92.5 455.1 97.7 455.4 C102.9 455.7 106.5 455.6 111.0 455.5 C115.5 455.4 120.7 455.1 125.0 454.5 C129.3 453.9 132.4 452.3 136.6 451.9 C140.8 451.5 146.1 452.2 150.0 452.3 C153.9 452.4 156.3 452.4 160.0 452.4 C163.7 452.3 167.0 453.0 172.0 452.0 C177.0 451.0 185.0 448.3 190.0 446.5 C195.0 444.7 197.0 441.5 202.0 441.4 C207.0 441.3 214.0 444.9 220.0 446.0 C226.0 447.1 232.0 447.7 238.0 447.7 C244.0 447.7 251.7 446.7 256.0 446.0 C260.3 445.3 259.9 443.1 264.0 443.7 C268.1 444.3 275.2 448.0 280.5 449.5 C285.8 451.0 293.4 452.0 296.0 452.5 L296 611 C294.4 610.3 291.1 608.4 286.5 607.0 C281.9 605.6 277.6 603.3 268.5 602.5 C259.4 601.7 240.2 601.6 232.0 602.0 C223.8 602.4 223.0 605.1 219.0 605.0 C215.0 604.9 212.7 602.3 208.0 601.5 C203.3 600.7 195.0 600.9 191.0 600.0 C187.0 599.1 187.2 597.1 184.0 596.0 C180.8 594.9 176.0 593.5 172.0 593.3 C168.0 593.1 164.6 593.8 160.0 595.0 C155.4 596.2 149.1 598.3 144.5 600.3 C139.9 602.3 136.6 606.2 132.5 607.0 C128.4 607.8 123.8 605.5 120.0 605.0 C116.2 604.5 112.7 604.0 110.0 604.0 C107.3 604.0 105.7 604.7 104.0 605.0 C102.3 605.3 101.2 605.9 100.0 606.0 C98.8 606.1 98.7 605.6 97.0 605.5 C95.3 605.4 92.3 605.1 90.0 605.3 C87.7 605.5 85.3 606.0 83.0 606.5 C80.7 607.0 77.8 607.9 76.0 608.5 C74.2 609.1 73.2 609.5 72.0 610.0 C70.8 610.5 69.5 611.2 68.5 611.3 C67.5 611.4 67.1 611.0 66.0 610.5 C64.9 610.0 63.8 609.2 62.0 608.0 C60.2 606.8 57.3 605.0 55.0 603.5 C52.7 602.0 51.1 600.2 48.0 599.0 C44.9 597.8 40.1 596.7 36.4 596.5 C32.7 596.3 28.6 597.4 26.0 598.0 C23.4 598.6 23.0 599.9 21.0 600.0 C19.0 600.1 16.2 598.8 14.0 598.5 C11.8 598.2 9.0 598.1 8.0 598.0 Z"/></clipPath>
<text x="65.500" y="616" font-family="Liberation Sans, sans-serif" font-size="14" fill="#4a4a4a" clip-path="url(#pc)">fr</text>
<g clip-path="url(#pc)" stroke="#dcdcdc" stroke-width="1"><path d="M8 467.500 H291 M13 508.500 H291 M13 549.500 H291 M13 590.500 H291"/></g>
</svg>
<div class="a" style="left:29px;top:511px;width:134px;height:35px;border:5px solid #029594;border-radius:9px"></div>
<span class="a" style="left:47.41px;top:478.0px;height:20px;line-height:20px;font-size:14px;color:#4e4e4e;letter-spacing:-0.036px">Repository</span>
<span class="a" style="left:48.06px;top:519.0px;height:20px;line-height:20px;font-size:14px;color:#03595b;letter-spacing:-0.482px;font-weight:bold;-webkit-text-stroke:0.15px currentColor">Organisationen</span>
<span class="a" style="left:47.41px;top:560.0px;height:20px;line-height:20px;font-size:14px;color:#4e4e4e;letter-spacing:-0.133px">Rolle Person zu Person</span>
<span class="a" style="left:1135.51px;top:426.3px;height:20px;line-height:20px;font-size:14px;color:#4a4a4a;letter-spacing:-0.004px">Bearbeiten</span>
<span class="a" style="left:1135.94px;top:456.3px;height:20px;line-height:20px;font-size:14px;color:#4a4a4a;letter-spacing:-0.031px">Organisation verschieben</span>
<span class="a" style="left:1135.72px;top:486.0px;height:20px;line-height:20px;font-size:14px;color:#4a4a4a;letter-spacing:0.056px">Unterorganisation erstellen</span>
<span class="a" style="left:1135.51px;top:535.0px;height:20px;line-height:20px;font-size:14px;color:#4a4a4a;letter-spacing:0.142px">Löschen</span>
</div>
</body>
</html>
